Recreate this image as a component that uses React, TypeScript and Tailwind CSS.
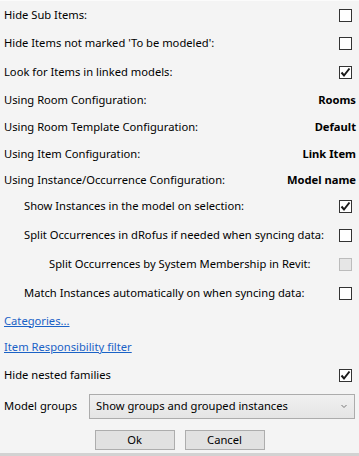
import React from 'react';

type Row = {
    label: string;
    h: string;
    indent?: string;
    checked?: boolean;
    disabled?: boolean;
    value?: string;
    check?: boolean;
};

// Case à cocher façon WinForms
function CheckBox({ checked, disabled }: { checked?: boolean; disabled?: boolean }) {
    return (
        <div
            className={
                disabled
                    ? 'w-[13px] h-[13px] border border-[#bcbcbc] bg-[#e6e6e6] mr-[4px] shrink-0'
                    : 'w-[13px] h-[13px] border border-[#333333] bg-white mr-[4px] shrink-0 flex items-center justify-center'
            }
        >
            {checked && (
                <svg width="11" height="11" viewBox="0 0 11 11">
                    <path d="M1.5 5.5 L4 8.5 L9.5 1.5" fill="none" stroke="#1a1a1a" strokeWidth="2" />
                </svg>
            )}
        </div>
    );
}

const rows: Row[] = [
    { label: 'Hide Sub Items:', h: 'h-[28px]', check: true },
    { label: "Hide Items not marked 'To be modeled':", h: 'h-[29px]', check: true },
    { label: 'Look for Items in linked models:', h: 'h-[29px]', check: true, checked: true },
    { label: 'Using Room Configuration:', h: 'h-[27px]', value: 'Rooms' },
    { label: 'Using Room Template Configuration:', h: 'h-[27px]', value: 'Default' },
    { label: 'Using Item Configuration:', h: 'h-[26px]', value: 'Link Item' },
    { label: 'Using Instance/Occurrence Configuration:', h: 'h-[26px]', value: 'Model name' },
    { label: 'Show Instances in the model on selection:', h: 'h-[27px]', indent: 'pl-[20px]', check: true, checked: true },
    { label: 'Split Occurrences in dRofus if needed when syncing data:', h: 'h-[30px]', indent: 'pl-[20px]', check: true },
    { label: 'Split Occurrences by System Membership in Revit:', h: 'h-[29px]', indent: 'pl-[45px]', check: true, disabled: true },
    { label: 'Match Instances automatically on when syncing data:', h: 'h-[29px]', indent: 'pl-[20px]', check: true },
];

export default function App() {
    return (
        <div
            className="w-[359px] h-[456px] bg-[#f4f4f4] text-[11.2px] text-black flex flex-col border-t border-[#fbfbfb]"
            style={{ fontFamily: '"Noto Sans", "Open Sans", sans-serif' }}
        >
            {rows.map((row) => (
                <div key={row.label} className={`${row.h} flex items-center justify-between pl-[4px] pr-[3px] whitespace-nowrap`}>
                    <span className={row.indent}>{row.label}</span>
                    {row.check && <CheckBox checked={row.checked} disabled={row.disabled} />}
                    {row.value && <span className="font-bold">{row.value}</span>}
                </div>
            ))}

            <div className="h-[26px] flex items-center pl-[4px]">
                <a className="text-[#1a62c6] underline">Categories...</a>
            </div>
            <div className="h-[27px] flex items-center pl-[4px]">
                <a className="text-[#1a62c6] underline">Item Responsibility filter</a>
            </div>
            <div className="h-[29px] flex items-center justify-between pl-[4px] pr-[3px]">
                <span>Hide nested families</span>
                <CheckBox checked />
            </div>

            <div className="h-[33px] flex items-center pl-[4px] pr-[4px] gap-[12px]">
                <span>Model groups</span>
                <div className="flex-1 h-[25px] border border-[#acacac] bg-gradient-to-b from-[#f0f0f0] to-[#e5e5e5] flex items-center justify-between pl-[6px] pr-[7px]">
                    <span>Show groups and grouped instances</span>
                    <svg width="6" height="5" viewBox="0 0 6 5">
                        <path d="M0.5 1 L3 3.5 L5.5 1" fill="none" stroke="#777" strokeWidth="1" />
                    </svg>
                </div>
            </div>

            <div className="flex justify-center gap-[10px] mt-[7px]">
                <button className="w-[80px] h-[20px] border border-[#adadad] bg-[#e1e1e1] leading-none">Ok</button>
                <button className="w-[80px] h-[20px] border border-[#adadad] bg-[#e1e1e1] leading-none">Cancel</button>
            </div>

            <div className="mt-auto h-[3px] bg-[#d2d2d2]" />
        </div>
    );
}
